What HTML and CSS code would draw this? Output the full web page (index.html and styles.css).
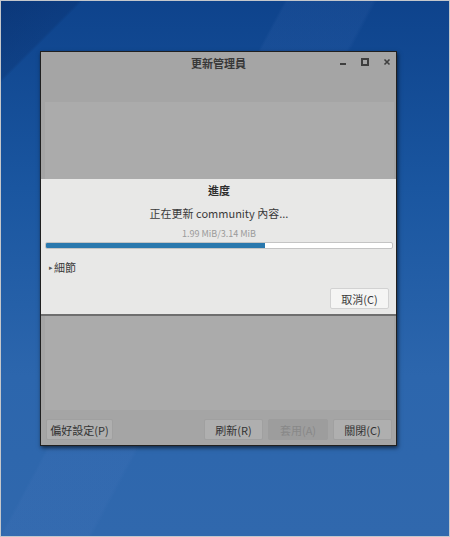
FILE: index.html
```html
<!DOCTYPE html>
<html lang="zh-Hant">
<head>
    <meta charset="UTF-8">
    <meta name="viewport" content="width=device-width, initial-scale=1.0">
    <title>更新管理員</title>
    <link rel="stylesheet" href="styles.css">
</head>
<body>
    <div class="desktop">
        <!-- Main window (dimmed while the progress dialog is up) -->
        <div class="window">
            <div class="titlebar">
                <span class="title">更新管理員</span>
                <div class="win-controls">
                    <svg width="8" height="8" viewBox="0 0 8 8"><rect x="1" y="5" width="6" height="2" fill="#3f3f3f"/></svg>
                    <svg width="8" height="8" viewBox="0 0 8 8"><rect x="1" y="1" width="6" height="6" fill="none" stroke="#3f3f3f" stroke-width="2"/></svg>
                    <svg width="8" height="8" viewBox="0 0 8 8"><path d="M1.5 1.5 L6.5 6.5 M6.5 1.5 L1.5 6.5" stroke="#3f3f3f" stroke-width="1.6"/></svg>
                </div>
            </div>
            <div class="toolbar"></div>
            <div class="update-list"></div>
            <div class="button-bar">
                <button class="btn">偏好設定(P)</button>
                <span class="spacer"></span>
                <button class="btn">刷新(R)</button>
                <button class="btn btn-disabled">套用(A)</button>
                <button class="btn">關閉(C)</button>
            </div>

            <!-- Progress dialog -->
            <div class="progress-dialog">
                <h3 class="dialog-title">進度</h3>
                <p class="dialog-message">正在更新 community 內容...</p>
                <p class="progress-label">1.99 MiB/3.14 MiB</p>
                <div class="progress-trough">
                    <div class="progress-fill" style="width: 63.4%"></div>
                </div>
                <div class="details">
                    <span class="expander">&#9656;</span>
                    <span>細節</span>
                </div>
                <div class="dialog-actions">
                    <button class="cancel-btn">取消(C)</button>
                </div>
            </div>
        </div>
    </div>
</body>
</html>
```

FILE: styles.css
```css
/* Desktop */
* {
    box-sizing: border-box;
}

body {
    margin: 0;
    font-family: "Noto Sans CJK TC", "Noto Sans", sans-serif;
    font-size: 11px;
}

.desktop {
    width: 450px;
    height: 537px;
    border: 1px solid #c4c7cc;
    overflow: hidden;
    background:
        linear-gradient(135deg, rgba(5, 30, 80, 0.3) 0, rgba(5, 30, 80, 0.2) 55px, rgba(0, 0, 0, 0) 58px),
        linear-gradient(118deg, rgba(0, 0, 0, 0) 250px, rgba(90, 130, 200, 0.1) 253px, rgba(90, 130, 200, 0.1) 328px, rgba(0, 0, 0, 0) 332px),
        linear-gradient(180deg, #0e438c 0%, #1a56a0 35%, #2c66ad 70%, #3068ad 100%);
    padding-top: 50px;
    padding-left: 39px;
}

/* Main window */
.window {
    position: relative;
    width: 357px;
    height: 395px;
    border: 1px solid #202020;
    background: #a5a5a5;
    box-shadow: 1px 2px 4px rgba(0, 0, 0, 0.6);
    display: flex;
    flex-direction: column;
}

.titlebar {
    height: 22px;
    display: flex;
    align-items: center;
    justify-content: center;
    position: relative;
}

.title {
    font-weight: bold;
    color: #383838;
    font-size: 11px;
}

.win-controls {
    position: absolute;
    right: 5px;
    top: 6px;
    display: flex;
    gap: 14px;
}

.toolbar {
    height: 28px;
}

.update-list {
    flex: 1;
    margin: 0 2px 0 4px;
    background: #ababab;
}

.button-bar {
    height: 35px;
    display: flex;
    align-items: flex-start;
    gap: 5px;
    padding: 9px 4px 0 5px;
}

.spacer {
    flex: 1;
}

.btn {
    height: 21px;
    width: 59px;
    padding: 0;
    font-family: inherit;
    font-size: 11px;
    color: #333;
    background: #afafaf;
    border: 1px solid #a0a0a0;
    border-radius: 2px;
}

.btn:first-child {
    width: 67px;
}

.btn-disabled {
    width: 60px;
    background: #9d9d9d;
    border-color: #9d9d9d;
    color: #888;
}

/* Progress dialog */
.progress-dialog {
    position: absolute;
    top: 127px;
    left: 0;
    right: 0;
    height: 137px;
    background: #e8e8e7;
    border-bottom: 2px solid #6e6e6e;
    padding: 3px 3px 0 4px;
    display: flex;
    flex-direction: column;
    color: #3a3a3a;
}

.dialog-title {
    margin: 0;
    line-height: 16px;
    font-size: 11px;
    text-align: center;
    color: #2e2e2e;
}

.dialog-message {
    margin: 7px 0 0;
    line-height: 16px;
    text-align: center;
}

.progress-label {
    margin: 7px 0 0;
    line-height: 12px;
    font-size: 9px;
    text-align: center;
    color: #9a9a9a;
}

.progress-trough {
    margin-top: 2px;
    height: 7px;
    background: #ffffff;
    border: 1px solid #c4c4c4;
    border-radius: 2px;
    overflow: hidden;
}

.progress-fill {
    height: 100%;
    background: #2a78ad;
}

.details {
    margin-top: 10px;
    height: 16px;
    line-height: 16px;
    display: flex;
    align-items: center;
    gap: 1px;
    padding-left: 4px;
}

.expander {
    font-size: 7px;
    color: #555;
}

.dialog-actions {
    margin-top: 13px;
    display: flex;
    justify-content: flex-end;
    padding-right: 4px;
}

.cancel-btn {
    width: 59px;
    height: 21px;
    padding: 0;
    font-family: inherit;
    font-size: 11px;
    color: #3a3a3a;
    background: #f5f5f4;
    border: 1px solid #d2d2d2;
    border-radius: 2px;
}
```
